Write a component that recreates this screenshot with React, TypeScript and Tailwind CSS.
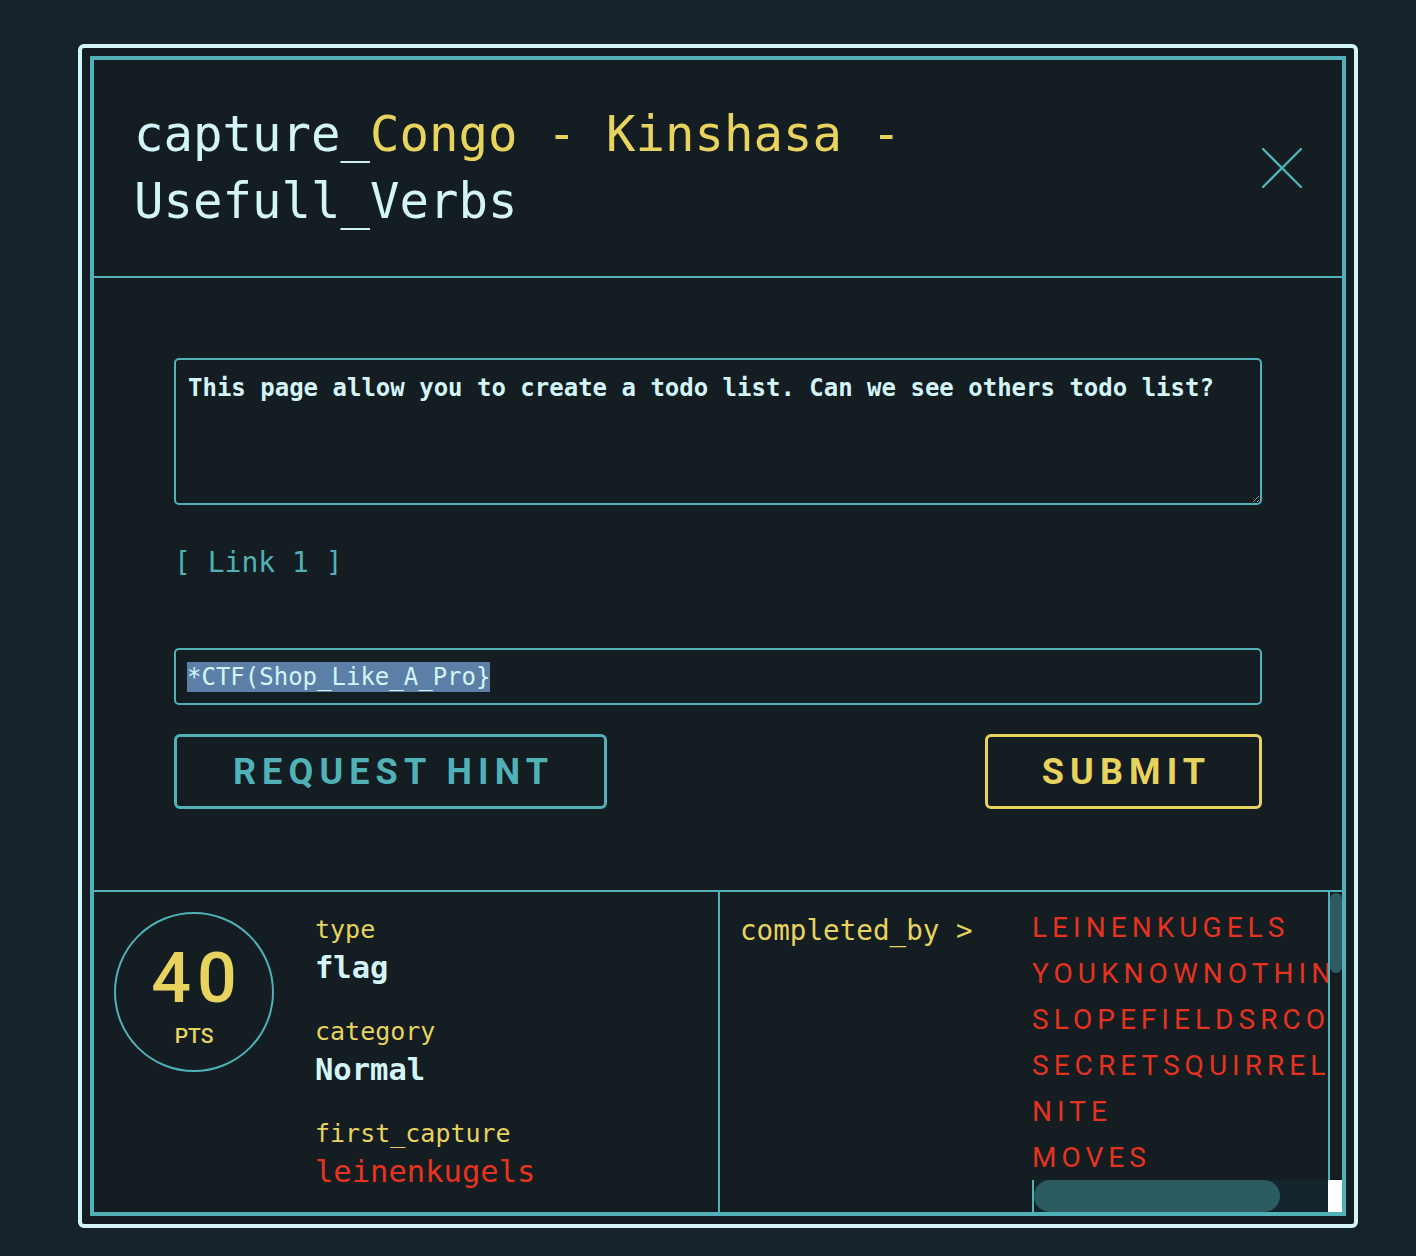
import React from "react";

const names = [
  "LEINENKUGELS",
  "YOUKNOWNOTHINGJONSNOW",
  "SLOPEFIELDSRCOOL",
  "SECRETSQUIRREL",
  "NITE",
  "MOVES",
  "HACKERMAN",
  "ROOTKIT",
];

export default function App() {
  return (
    <div className="min-h-screen w-full bg-[#17232a] pt-[44px] pl-[78px] pb-[28px]">
      <div className="w-[1280px] h-[1184px] rounded-[6px] border-4 border-[#d4f5f8] bg-[#131d22] p-[8px]">
        <div className="h-full border-4 border-[#50b1b7] flex flex-col">
          {/* header */}
          <div className="h-[218px] shrink-0 border-b-2 border-[#50b1b7] flex items-center justify-between px-[40px]">
            <div className="font-['DejaVu_Sans_Mono',monospace] text-[49px] leading-[67px] text-[#d4f5f8] max-w-[1100px]">
              capture_<span className="text-[#e8d35e]">Congo - Kinshasa -</span> Usefull_Verbs
            </div>
            <svg width="40" height="40" viewBox="0 0 40 40" className="shrink-0">
              <line x1="1" y1="1" x2="39" y2="39" stroke="#50b1b7" strokeWidth="2.4" strokeLinecap="round" />
              <line x1="39" y1="1" x2="1" y2="39" stroke="#50b1b7" strokeWidth="2.4" strokeLinecap="round" />
            </svg>
          </div>

          {/* body */}
          <div className="shrink-0 border-b-2 border-[#50b1b7] px-[80px] pt-[80px] pb-[81px] flex flex-col">
            <textarea
              readOnly
              defaultValue="This page allow you to create a todo list. Can we see others todo list?"
              className="block w-full h-[147px] border-2 border-[#50b1b7] rounded-[5px] bg-transparent px-[12px] pt-[13px] font-['DejaVu_Sans_Mono',monospace] font-bold text-[24px] leading-[30px] text-[#d4f5f8] outline-none [color-scheme:dark]"
            />
            <div className="mt-[38px] font-['DejaVu_Sans_Mono',monospace] text-[28px] leading-[40px] text-[#50b1b7]">
              [ Link 1 ]
            </div>
            <div className="mt-[65px] h-[57px] border-2 border-[#50b1b7] rounded-[5px] flex items-center px-[11px]">
              <span className="bg-[#5b7fa6] font-['DejaVu_Sans_Mono',monospace] text-[24px] leading-[30px] text-[#d4f5f8]">
                {"*CTF(Shop_Like_A_Pro}"}
              </span>
            </div>
            <div className="mt-[29px] flex justify-between">
              <button className="w-[433px] h-[75px] border-[3px] border-[#50b1b7] rounded-[6px] flex items-center justify-center pl-[6px] font-['Roboto',sans-serif] font-bold text-[36px] tracking-[0.17em] text-[#50b1b7]">
                REQUEST HINT
              </button>
              <button className="w-[277px] h-[75px] border-[3px] border-[#e8d35e] rounded-[6px] flex items-center justify-center pl-[6px] font-['Roboto',sans-serif] font-bold text-[36px] tracking-[0.17em] text-[#e8d35e]">
                SUBMIT
              </button>
            </div>
          </div>

          {/* footer */}
          <div className="flex-1 flex min-h-0">
            <div className="w-[626px] shrink-0 border-r-2 border-[#50b1b7] flex pl-[20px] pt-[20px]">
              <div className="w-[160px] h-[160px] shrink-0 rounded-full border-2 border-[#50b1b7] flex flex-col items-center justify-center pt-[13px]">
                <div className="font-['Roboto',sans-serif] font-medium text-[70px] leading-[70px] tracking-[6px] pl-[6px] text-[#e8d35e] mt-[-6px]">
                  40
                </div>
                <div className="font-['Roboto',sans-serif] font-medium text-[21px] leading-[26px] text-[#e8d35e] mt-[10px]">
                  PTS
                </div>
              </div>
              <div className="ml-[41px] pt-[1px] flex flex-col font-['DejaVu_Sans_Mono',monospace]">
                <div className="text-[25px] leading-[34px] text-[#e8d35e]">type</div>
                <div className="text-[30.5px] leading-[42px] font-bold text-[#d4f5f8]">flag</div>
                <div className="mt-[26px] text-[25px] leading-[34px] text-[#e8d35e]">category</div>
                <div className="text-[30.5px] leading-[42px] font-bold text-[#d4f5f8]">Normal</div>
                <div className="mt-[26px] text-[25px] leading-[34px] text-[#e8d35e]">first_capture</div>
                <div className="text-[30.5px] leading-[42px] text-[#e8341f]">leinenkugels</div>
              </div>
            </div>

            <div className="flex-1 flex min-w-0">
              <div className="w-[312px] shrink-0 pl-[20px] pt-[19px] font-['DejaVu_Sans_Mono',monospace] text-[27.6px] leading-[40px] text-[#e8d35e] whitespace-nowrap">
                completed_by &gt;
              </div>
              <div className="flex-1 min-w-0 flex flex-col">
                <div className="flex-1 flex min-h-0">
                  <div className="flex-1 min-w-0 overflow-hidden pt-[13px]">
                    {names.map((n) => (
                      <div
                        key={n}
                        className="font-['Roboto',sans-serif] text-[28px] leading-[46px] tracking-[0.18em] text-[#e5331f] whitespace-nowrap"
                      >
                        {n}
                      </div>
                    ))}
                  </div>
                  <div className="w-[14px] shrink-0 border-l-2 border-[#50b1b7] flex flex-col">
                    <div className="mt-[1px] h-[80px] w-full rounded-full bg-[#2c5c62]" />
                  </div>
                </div>
                <div className="h-[32px] shrink-0 flex">
                  <div className="flex-1 border-l-2 border-[#50b1b7] bg-[#15232a] flex">
                    <div className="w-[246px] h-full rounded-full bg-[#2c5c62]" />
                  </div>
                  <div className="w-[14px] shrink-0 bg-white" />
                </div>
              </div>
            </div>
          </div>
        </div>
      </div>
    </div>
  );
}
